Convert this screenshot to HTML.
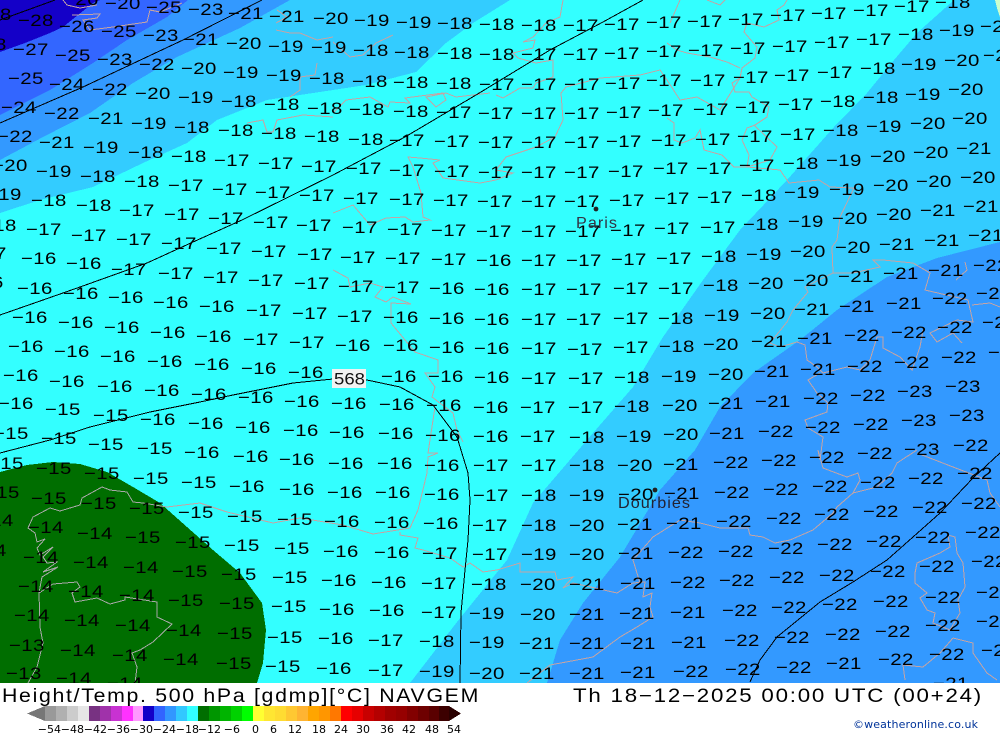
<!DOCTYPE html>
<html><head><meta charset="utf-8"><style>
html,body{margin:0;padding:0;background:#fff}
svg{display:block}
.l text{font:17px "Liberation Sans",sans-serif;fill:#000;letter-spacing:.3px;transform-box:fill-box;transform-origin:0 50%;transform:scaleX(1.2)}
polygon,polyline{shape-rendering:crispEdges}
</style></head><body>
<svg width="1000" height="733" viewBox="0 0 1000 733" xmlns="http://www.w3.org/2000/svg">
<rect width="1000" height="733" fill="#fff"/>
<rect width="1000" height="683" fill="#33ffff"/>
<polygon fill="#33ccff" points="0,0 510,0 473,23 446,43 416,72 366,85 333,90 267,100 217,120 187,143 143,163 93,187 40,200 0,213"/>
<polygon fill="#3399ff" points="0,0 290,0 240,28 177,57 133,83 90,113 43,137 0,160"/>
<polygon fill="#3366ff" points="0,0 188,0 167,17 127,40 93,63 50,90 0,115"/>
<polygon fill="#1400c8" points="0,0 100,0 93,3 63,27 50,33 25,43 0,52"/>
<polygon fill="#33ccff" points="954,0 1000,0 1000,683 410,683 457,622 507,560 533,503 593,433 633,387 663,337 703,280 740,230 787,180 834,127 867,93 894,60 917,33"/>
<polygon fill="#3399ff" points="1000,242 1000,683 547,683 560,640 583,603 620,557 660,490 695,450 720,407 753,373 800,340 837,310 887,277 937,258"/>
<polygon fill="#ccffcc" points="995,0 1000,0 1000,17 997,8"/>
<polygon fill="#006e00" points="0,472 27,465 53,462 80,464 107,472 133,487 160,503 187,527 213,550 240,573 262,603 266,630 263,663 257,683 0,683"/>
<g fill="none" stroke="#c4a4a4" stroke-width="1">
<polyline points="63,0 67,5 80,8 97,5"/>
<polyline points="72,15 100,14 97,18 83,20 90,30 113,27 147,22 150,10 160,12 182,3"/>
<polyline points="276,23 287,17 277,10"/>
<polyline points="276,30 290,33 300,33 317,40 333,37"/>
<polyline points="290,97 300,90 300,77 315,75 317,63"/>
<polyline points="247,123 263,120 267,132 273,132 277,120 303,115 333,117"/>
<polyline points="563,0 560,17 546,23 533,37 523,42 535,40 533,48 513,53 518,58 536,63 553,60 553,77 536,83 533,88 520,88 503,98 496,95"/>
<polyline points="393,35 376,43 363,55 350,57 333,42"/>
<polyline points="490,93 456,97 446,93 426,97 436,107 446,100 443,93 405,98 410,103 390,102 388,107 370,97 346,100 333,113"/>
<polyline points="600,78 566,87 561,93 563,120 555,137 536,147 506,157 496,170 513,173 496,180 480,183 443,178 433,163 440,160 420,158 408,157 413,167 421,193 423,217 430,220 413,222 405,217 386,218 370,225 353,205 333,213"/>
<polyline points="333,270 348,278 350,287 370,283 383,287 375,297 386,302 393,297 411,304 391,303 391,323 405,340 415,352 438,360 438,373 425,373 435,387 432,397 453,413 457,430 463,442"/>
<polyline points="435,407 428,453 438,453 428,457 427,473 418,510 410,528 373,534 343,525 300,518 273,523 227,512 200,503 167,507"/>
<polyline points="400,532 400,535 418,538 415,548 423,550 450,558 463,567 470,563 483,572 497,570 520,563 520,572 555,572 557,580 573,577 563,588 573,583 617,593 633,583 645,582 643,597 652,593 650,607 653,617 637,627 620,637 593,657 550,665 527,683"/>
<polyline points="680,0 670,23"/><polyline points="707,0 720,5 725,0"/>
<polyline points="787,0 784,5 777,10 779,20 764,27 747,23 744,32 757,47 755,58 742,68 740,78 732,83 735,92 749,92 752,97 769,107 767,117 755,125 747,128 742,140 749,155 747,167 734,167 722,155 704,150 700,130 695,138 682,143 674,140 674,123 667,118"/>
<polyline points="754,125 777,147 770,160 747,167 780,170 789,183 819,180 830,187 854,188 840,217 837,240 832,247 833,273"/>
<polyline points="667,43 677,50 687,53 710,57 727,62 740,68"/>
<polyline points="600,78 640,75 660,70 667,80 680,100 697,97 720,110 740,78"/>
<polyline points="833,273 853,273 880,267 873,260 883,260 913,263 930,273 925,290 968,300 973,322 957,320 930,333 937,342 953,333 962,343"/>
<polyline points="965,262 967,270 956,280"/><polyline points="972,305 990,303 1000,307"/>
<polyline points="833,273 805,287 808,292 793,310 787,322 770,343 780,347 797,342 805,345 807,360 817,367 823,373 847,367 860,370 870,360 877,337 883,337 883,348 900,357 912,370 920,347 923,330"/>
<polyline points="820,373 808,380 817,393 828,403 827,412 805,420 808,428 823,437 820,460 818,450 823,468 847,477 858,473 860,480 853,493 837,507 833,513 813,530 790,540 775,543 763,537 750,535 748,528 720,528 700,523 680,520 653,537 633,560 640,583"/>
<polyline points="917,450 897,463 892,473 877,487 853,493"/>
<polyline points="917,453 953,467 987,480 990,493 1000,507"/>
<polyline points="948,535 955,537 957,553 963,563 965,587 958,600 960,613 950,630 933,623 935,613 927,610 920,598 927,593 915,583 915,573 917,563 940,553 950,547 948,535"/>
<polyline points="953,638 973,643 973,653 987,673 997,680"/>
<polyline points="953,638 940,653 923,667 903,665 905,680"/>
<polyline points="167,507 143,503 133,502 127,492 110,490 102,487 82,498 80,505 60,511 50,508 33,517 28,528 35,533 37,542 45,539 37,548 40,555 53,547 43,557 47,563 57,562 43,572 58,567 42,577 39,593 40,627 43,643 37,667 28,683" stroke="#a8a8a8"/>
<polyline points="39,593 53,584 77,582 80,587 72,593 75,602 97,598 110,604 125,600 125,597 157,602 157,617 172,624 153,642 140,650 132,653 137,667 135,683" stroke="#a8a8a8"/>
</g>
<g fill="none" stroke="#000" stroke-width="1">
<polyline points="0,20 55,0"/>
<polyline points="0,123 83,87 183,40 262,0"/>
<polyline points="0,315 43,300 80,287 147,263 193,242 242,220 333,175 405,137 476,95 550,50 603,22 643,0"/>
<polyline points="0,453 50,440 90,427 150,412 200,402 233,395 293,383 333,379 367,380 400,387 433,405 457,437 468,473 470,500 468,540 465,570 461,613 460,683"/>
<polyline points="1000,453 973,478 940,513 913,537 887,560 853,582 820,602 777,637 760,660 750,682"/>
</g>
<g transform="translate(-24,6)" class="l">
<text x="87" y="-1">−26</text><text x="129" y="3">−20</text><text x="170" y="7">−25</text><text x="212" y="9">−23</text><text x="252" y="13">−21</text><text x="293" y="16">−21</text><text x="337" y="18">−20</text><text x="378" y="20">−19</text><text x="420" y="22">−19</text><text x="461" y="23">−18</text><text x="503" y="24">−18</text><text x="545" y="25">−18</text><text x="587" y="25">−17</text><text x="628" y="24">−17</text><text x="670" y="22">−17</text><text x="711" y="21">−17</text><text x="752" y="19">−17</text><text x="794" y="15">−17</text><text x="835" y="13">−17</text><text x="877" y="10">−17</text><text x="918" y="6">−17</text><text x="959" y="2">−18</text>
<text x="0" y="14">−28</text><text x="42" y="20">−28</text><text x="83" y="26">−26</text><text x="125" y="31">−25</text><text x="167" y="35">−23</text><text x="207" y="39">−21</text><text x="250" y="43">−20</text><text x="292" y="46">−19</text><text x="335" y="47">−19</text><text x="377" y="50">−18</text><text x="418" y="52">−18</text><text x="461" y="53">−18</text><text x="503" y="54">−18</text><text x="545" y="54">−17</text><text x="587" y="54">−17</text><text x="628" y="53">−17</text><text x="670" y="51">−17</text><text x="712" y="50">−17</text><text x="754" y="48">−17</text><text x="796" y="46">−17</text><text x="838" y="42">−17</text><text x="880" y="39">−17</text><text x="922" y="34">−18</text><text x="963" y="30">−19</text><text x="1004" y="26">−20</text>
<text x="-5" y="44">−28</text><text x="37" y="49">−27</text><text x="79" y="55">−25</text><text x="121" y="59">−23</text><text x="163" y="64">−22</text><text x="205" y="68">−20</text><text x="247" y="72">−19</text><text x="290" y="75">−19</text><text x="333" y="78">−18</text><text x="376" y="81">−18</text><text x="417" y="82">−18</text><text x="460" y="83">−18</text><text x="503" y="84">−17</text><text x="545" y="84">−17</text><text x="588" y="84">−17</text><text x="629" y="83">−17</text><text x="670" y="80">−17</text><text x="714" y="80">−17</text><text x="757" y="77">−17</text><text x="798" y="75">−17</text><text x="841" y="72">−17</text><text x="884" y="68">−18</text><text x="925" y="64">−19</text><text x="968" y="60">−20</text><text x="1007" y="55">−20</text>
<text x="32" y="78">−25</text><text x="73" y="84">−24</text><text x="116" y="89">−22</text><text x="159" y="93">−20</text><text x="202" y="97">−19</text><text x="245" y="101">−18</text><text x="288" y="104">−18</text><text x="331" y="108">−18</text><text x="373" y="109">−18</text><text x="417" y="111">−18</text><text x="460" y="112">−17</text><text x="502" y="113">−17</text><text x="545" y="113">−17</text><text x="588" y="113">−17</text><text x="630" y="112">−17</text><text x="672" y="110">−17</text><text x="717" y="109">−17</text><text x="759" y="107">−17</text><text x="802" y="104">−17</text><text x="844" y="101">−18</text><text x="887" y="97">−18</text><text x="929" y="94">−19</text><text x="972" y="89">−20</text>
<text x="25" y="107">−24</text><text x="68" y="113">−22</text><text x="112" y="118">−21</text><text x="155" y="123">−19</text><text x="198" y="127">−18</text><text x="242" y="130">−18</text><text x="285" y="133">−18</text><text x="328" y="136">−18</text><text x="372" y="139">−18</text><text x="413" y="140">−17</text><text x="458" y="141">−17</text><text x="502" y="142">−17</text><text x="545" y="142">−17</text><text x="588" y="142">−17</text><text x="630" y="141">−17</text><text x="675" y="140">−17</text><text x="719" y="139">−17</text><text x="761" y="136">−17</text><text x="804" y="134">−17</text><text x="847" y="130">−18</text><text x="890" y="126">−19</text><text x="934" y="123">−20</text><text x="976" y="118">−20</text>
<text x="21" y="136">−22</text><text x="63" y="142">−21</text><text x="107" y="147">−19</text><text x="152" y="152">−18</text><text x="195" y="156">−18</text><text x="238" y="160">−17</text><text x="282" y="163">−17</text><text x="325" y="166">−17</text><text x="370" y="168">−17</text><text x="413" y="170">−17</text><text x="458" y="171">−17</text><text x="502" y="172">−17</text><text x="545" y="172">−17</text><text x="588" y="172">−17</text><text x="632" y="171">−17</text><text x="677" y="168">−17</text><text x="720" y="168">−17</text><text x="763" y="165">−17</text><text x="807" y="163">−18</text><text x="850" y="160">−19</text><text x="894" y="156">−20</text><text x="937" y="152">−20</text><text x="980" y="148">−21</text>
<text x="16" y="165">−20</text><text x="60" y="171">−19</text><text x="104" y="176">−18</text><text x="148" y="181">−18</text><text x="192" y="185">−17</text><text x="236" y="189">−17</text><text x="279" y="192">−17</text><text x="323" y="195">−17</text><text x="367" y="198">−17</text><text x="413" y="199">−17</text><text x="457" y="200">−17</text><text x="501" y="201">−17</text><text x="545" y="201">−17</text><text x="588" y="201">−17</text><text x="633" y="200">−17</text><text x="678" y="198">−17</text><text x="721" y="197">−17</text><text x="765" y="195">−18</text><text x="808" y="192">−19</text><text x="853" y="189">−19</text><text x="897" y="185">−20</text><text x="940" y="181">−20</text><text x="984" y="177">−20</text>
<text x="10" y="194">−19</text><text x="55" y="200">−18</text><text x="100" y="205">−18</text><text x="143" y="210">−17</text><text x="188" y="214">−17</text><text x="232" y="218">−17</text><text x="277" y="222">−17</text><text x="320" y="225">−17</text><text x="366" y="227">−17</text><text x="411" y="229">−17</text><text x="455" y="230">−17</text><text x="500" y="231">−17</text><text x="545" y="231">−17</text><text x="589" y="231">−17</text><text x="634" y="230">−17</text><text x="678" y="228">−17</text><text x="724" y="227">−17</text><text x="767" y="224">−18</text><text x="812" y="221">−19</text><text x="856" y="218">−20</text><text x="900" y="214">−20</text><text x="944" y="210">−21</text><text x="987" y="206">−21</text>
<text x="5" y="225">−18</text><text x="50" y="229">−17</text><text x="95" y="235">−17</text><text x="140" y="239">−17</text><text x="185" y="243">−17</text><text x="230" y="248">−17</text><text x="275" y="251">−17</text><text x="321" y="254">−17</text><text x="364" y="257">−17</text><text x="409" y="258">−17</text><text x="455" y="259">−17</text><text x="500" y="260">−16</text><text x="545" y="260">−17</text><text x="590" y="260">−17</text><text x="635" y="259">−17</text><text x="680" y="258">−17</text><text x="725" y="256">−18</text><text x="770" y="254">−19</text><text x="814" y="251">−20</text><text x="859" y="247">−20</text><text x="903" y="244">−21</text><text x="948" y="240">−21</text><text x="992" y="235">−21</text>
<text x="-5" y="253">−17</text><text x="45" y="258">−16</text><text x="90" y="263">−16</text><text x="135" y="269">−17</text><text x="182" y="273">−17</text><text x="227" y="277">−17</text><text x="272" y="280">−17</text><text x="318" y="283">−17</text><text x="362" y="286">−17</text><text x="408" y="287">−17</text><text x="453" y="288">−16</text><text x="498" y="289">−16</text><text x="545" y="289">−17</text><text x="590" y="289">−17</text><text x="637" y="288">−17</text><text x="682" y="288">−17</text><text x="727" y="285">−18</text><text x="772" y="283">−20</text><text x="817" y="280">−20</text><text x="862" y="276">−21</text><text x="907" y="273">−21</text><text x="952" y="270">−21</text><text x="997" y="265">−22</text>
<text x="-8" y="282">−16</text><text x="41" y="288">−16</text><text x="87" y="293">−16</text><text x="132" y="297">−16</text><text x="177" y="302">−16</text><text x="223" y="306">−16</text><text x="270" y="310">−17</text><text x="316" y="313">−17</text><text x="361" y="316">−17</text><text x="407" y="317">−16</text><text x="453" y="318">−16</text><text x="498" y="319">−16</text><text x="545" y="319">−17</text><text x="590" y="319">−17</text><text x="637" y="318">−17</text><text x="682" y="318">−18</text><text x="728" y="315">−19</text><text x="774" y="313">−20</text><text x="818" y="309">−21</text><text x="863" y="306">−21</text><text x="910" y="303">−21</text><text x="956" y="298">−22</text><text x="1000" y="293">−22</text>
<text x="36" y="317">−16</text><text x="82" y="322">−16</text><text x="128" y="327">−16</text><text x="174" y="332">−16</text><text x="220" y="336">−16</text><text x="267" y="339">−17</text><text x="313" y="342">−17</text><text x="359" y="345">−16</text><text x="407" y="345">−16</text><text x="453" y="347">−16</text><text x="498" y="348">−16</text><text x="545" y="348">−17</text><text x="591" y="349">−17</text><text x="637" y="347">−17</text><text x="683" y="346">−18</text><text x="727" y="344">−20</text><text x="775" y="341">−21</text><text x="821" y="338">−21</text><text x="868" y="335">−22</text><text x="915" y="332">−22</text><text x="961" y="327">−22</text><text x="1006" y="322">−22</text>
<text x="32" y="346">−16</text><text x="78" y="351">−16</text><text x="124" y="356">−16</text><text x="171" y="361">−16</text><text x="218" y="364">−16</text><text x="265" y="368">−16</text><text x="312" y="372">−16</text><text x="405" y="376">−16</text><text x="452" y="376">−16</text><text x="498" y="377">−16</text><text x="545" y="378">−17</text><text x="592" y="378">−17</text><text x="638" y="377">−18</text><text x="685" y="376">−19</text><text x="732" y="374">−20</text><text x="778" y="371">−21</text><text x="824" y="369">−21</text><text x="871" y="366">−22</text><text x="918" y="362">−22</text><text x="965" y="357">−22</text><text x="1012" y="352">−22</text>
<text x="27" y="375">−16</text><text x="73" y="381">−16</text><text x="121" y="386">−16</text><text x="168" y="390">−16</text><text x="215" y="394">−16</text><text x="262" y="397">−16</text><text x="308" y="401">−16</text><text x="355" y="403">−16</text><text x="403" y="404">−16</text><text x="450" y="405">−16</text><text x="497" y="407">−16</text><text x="544" y="407">−17</text><text x="592" y="407">−17</text><text x="638" y="406">−18</text><text x="686" y="405">−20</text><text x="732" y="403">−21</text><text x="779" y="401">−21</text><text x="827" y="398">−22</text><text x="874" y="395">−22</text><text x="921" y="391">−23</text><text x="969" y="386">−23</text>
<text x="22" y="403">−16</text><text x="69" y="409">−15</text><text x="117" y="415">−15</text><text x="164" y="419">−16</text><text x="212" y="423">−16</text><text x="259" y="427">−16</text><text x="307" y="430">−16</text><text x="353" y="432">−16</text><text x="402" y="433">−16</text><text x="449" y="435">−16</text><text x="497" y="436">−16</text><text x="544" y="436">−17</text><text x="593" y="437">−18</text><text x="640" y="436">−19</text><text x="687" y="434">−20</text><text x="733" y="433">−21</text><text x="782" y="431">−22</text><text x="829" y="427">−22</text><text x="877" y="424">−22</text><text x="925" y="420">−23</text><text x="973" y="415">−23</text>
<text x="17" y="433">−15</text><text x="65" y="438">−15</text><text x="112" y="444">−15</text><text x="161" y="448">−15</text><text x="208" y="452">−16</text><text x="257" y="456">−16</text><text x="303" y="459">−16</text><text x="352" y="463">−16</text><text x="401" y="463">−16</text><text x="448" y="465">−16</text><text x="497" y="465">−17</text><text x="545" y="465">−17</text><text x="593" y="465">−18</text><text x="641" y="465">−20</text><text x="687" y="464">−21</text><text x="737" y="462">−22</text><text x="785" y="460">−22</text><text x="833" y="457">−22</text><text x="881" y="453">−22</text><text x="928" y="449">−23</text><text x="977" y="445">−22</text>
<text x="12" y="463">−15</text><text x="60" y="468">−15</text><text x="108" y="473">−15</text><text x="157" y="478">−15</text><text x="205" y="482">−15</text><text x="253" y="486">−16</text><text x="303" y="489">−16</text><text x="351" y="492">−16</text><text x="399" y="492">−16</text><text x="448" y="494">−16</text><text x="497" y="495">−17</text><text x="545" y="495">−18</text><text x="593" y="495">−19</text><text x="642" y="494">−20</text><text x="688" y="493">−21</text><text x="738" y="492">−22</text><text x="787" y="489">−22</text><text x="836" y="486">−22</text><text x="884" y="482">−22</text><text x="932" y="478">−22</text><text x="981" y="473">−22</text>
<text x="8" y="492">−15</text><text x="55" y="498">−15</text><text x="105" y="503">−15</text><text x="153" y="508">−15</text><text x="202" y="512">−15</text><text x="251" y="516">−15</text><text x="301" y="519">−15</text><text x="348" y="521">−16</text><text x="398" y="522">−16</text><text x="447" y="523">−16</text><text x="496" y="525">−17</text><text x="545" y="525">−18</text><text x="593" y="525">−20</text><text x="641" y="524">−21</text><text x="690" y="523">−21</text><text x="740" y="521">−22</text><text x="790" y="518">−22</text><text x="838" y="514">−22</text><text x="887" y="511">−22</text><text x="936" y="507">−22</text><text x="985" y="503">−22</text>
<text x="2" y="520">−14</text><text x="52" y="527">−14</text><text x="101" y="533">−14</text><text x="149" y="537">−15</text><text x="199" y="542">−15</text><text x="248" y="545">−15</text><text x="298" y="548">−15</text><text x="347" y="551">−16</text><text x="398" y="552">−16</text><text x="446" y="553">−17</text><text x="496" y="554">−17</text><text x="545" y="554">−19</text><text x="593" y="554">−20</text><text x="642" y="553">−21</text><text x="692" y="552">−22</text><text x="742" y="551">−22</text><text x="792" y="548">−22</text><text x="841" y="544">−22</text><text x="890" y="541">−22</text><text x="939" y="537">−22</text><text x="989" y="532">−22</text>
<text x="-5" y="550">−14</text><text x="47" y="557">−14</text><text x="97" y="562">−14</text><text x="147" y="567">−14</text><text x="196" y="571">−15</text><text x="245" y="574">−15</text><text x="296" y="577">−15</text><text x="345" y="580">−16</text><text x="395" y="582">−16</text><text x="445" y="583">−17</text><text x="495" y="584">−18</text><text x="544" y="584">−20</text><text x="593" y="584">−21</text><text x="644" y="583">−21</text><text x="694" y="582">−22</text><text x="743" y="580">−22</text><text x="793" y="577">−22</text><text x="843" y="575">−22</text><text x="894" y="571">−22</text><text x="943" y="566">−22</text><text x="995" y="561">−22</text>
<text x="42" y="586">−14</text><text x="92" y="591">−14</text><text x="143" y="595">−14</text><text x="192" y="600">−15</text><text x="243" y="603">−15</text><text x="295" y="606">−15</text><text x="343" y="609">−16</text><text x="393" y="610">−16</text><text x="445" y="612">−17</text><text x="493" y="613">−19</text><text x="544" y="614">−20</text><text x="593" y="614">−21</text><text x="643" y="613">−21</text><text x="694" y="612">−21</text><text x="746" y="610">−22</text><text x="795" y="607">−22</text><text x="846" y="604">−22</text><text x="897" y="601">−22</text><text x="949" y="597">−22</text><text x="1000" y="592">−22</text>
<text x="38" y="615">−14</text><text x="88" y="620">−14</text><text x="139" y="625">−14</text><text x="190" y="630">−14</text><text x="241" y="633">−15</text><text x="291" y="637">−15</text><text x="342" y="638">−16</text><text x="392" y="640">−17</text><text x="443" y="641">−18</text><text x="493" y="642">−19</text><text x="543" y="643">−21</text><text x="593" y="643">−21</text><text x="644" y="643">−21</text><text x="695" y="642">−21</text><text x="748" y="640">−22</text><text x="798" y="637">−22</text><text x="849" y="634">−22</text><text x="899" y="631">−22</text><text x="949" y="625">−22</text><text x="1000" y="621">−22</text>
<text x="33" y="645">−13</text><text x="84" y="650">−14</text><text x="136" y="655">−14</text><text x="187" y="659">−14</text><text x="240" y="663">−15</text><text x="289" y="666">−15</text><text x="340" y="668">−16</text><text x="392" y="670">−17</text><text x="443" y="671">−19</text><text x="493" y="673">−20</text><text x="543" y="673">−21</text><text x="593" y="673">−21</text><text x="644" y="672">−21</text><text x="697" y="671">−22</text><text x="749" y="669">−22</text><text x="800" y="667">−22</text><text x="850" y="663">−21</text><text x="902" y="659">−22</text><text x="953" y="654">−22</text><text x="1005" y="650">−22</text>
<text x="30" y="673">−13</text><text x="80" y="678">−14</text><text x="131" y="683">−14</text><text x="957" y="683">−21</text>
</g>
<rect x="332" y="369" width="34" height="19" fill="#f2f2f2"/>
<text x="334" y="384.5" font-family="Liberation Sans" font-size="17" textLength="31" lengthAdjust="spacingAndGlyphs" fill="#111">568</text>
<circle cx="596" cy="209" r="2.4" fill="#222"/>
<text x="576" y="228" font-family="Liberation Sans" font-size="16" letter-spacing="1" textLength="42" lengthAdjust="spacingAndGlyphs" fill="#334">Paris</text>
<circle cx="655" cy="490" r="2.4" fill="#222"/>
<text x="618" y="508" font-family="Liberation Sans" font-size="16" letter-spacing="1" textLength="73" lengthAdjust="spacingAndGlyphs" fill="#223">Dourbies</text>
<rect y="683" width="1000" height="50" fill="#fff"/>
<text x="2" y="702" font-family="Liberation Sans" font-size="19" letter-spacing="1.5" textLength="478" lengthAdjust="spacingAndGlyphs" fill="#000">Height/Temp. 500 hPa [gdmp][°C] NAVGEM</text>
<text x="573" y="702" font-family="Liberation Sans" font-size="19" letter-spacing="1.5" textLength="410" lengthAdjust="spacingAndGlyphs" fill="#000">Th 18−12−2025 00:00 UTC (00+24)</text>
<polygon points="27,713.5 45,706 45,721" fill="#777"/>
<g shape-rendering="crispEdges">
<rect x="45" y="706" width="11" height="15" fill="#999"/><rect x="56" y="706" width="11" height="15" fill="#b0b0b0"/><rect x="67" y="706" width="11" height="15" fill="#ccc"/><rect x="78" y="706" width="11" height="15" fill="#e6e6e6"/>
<rect x="89" y="706" width="11" height="15" fill="#783282"/><rect x="100" y="706" width="11" height="15" fill="#a032aa"/><rect x="111" y="706" width="11" height="15" fill="#c832d2"/><rect x="122" y="706" width="11" height="15" fill="#ff32ff"/><rect x="133" y="706" width="10" height="15" fill="#ff99ff"/>
<rect x="143" y="706" width="11" height="15" fill="#1400c8"/><rect x="154" y="706" width="11" height="15" fill="#3264ff"/><rect x="165" y="706" width="11" height="15" fill="#3296ff"/><rect x="176" y="706" width="11" height="15" fill="#32c8ff"/><rect x="187" y="706" width="11" height="15" fill="#32ffff"/>
<rect x="198" y="706" width="11" height="15" fill="#006e00"/><rect x="209" y="706" width="11" height="15" fill="#009600"/><rect x="220" y="706" width="11" height="15" fill="#00b400"/><rect x="231" y="706" width="11" height="15" fill="#00d200"/><rect x="242" y="706" width="11" height="15" fill="#00ff00"/>
<rect x="253" y="706" width="11" height="15" fill="#ffff32"/><rect x="264" y="706" width="11" height="15" fill="#ffe632"/><rect x="275" y="706" width="11" height="15" fill="#ffdc32"/><rect x="286" y="706" width="11" height="15" fill="#ffc832"/><rect x="297" y="706" width="11" height="15" fill="#ffb432"/><rect x="308" y="706" width="11" height="15" fill="#ffa500"/><rect x="319" y="706" width="11" height="15" fill="#ff9600"/><rect x="330" y="706" width="11" height="15" fill="#ff7800"/>
<rect x="341" y="706" width="11" height="15" fill="#ff0000"/><rect x="352" y="706" width="11" height="15" fill="#e60000"/><rect x="363" y="706" width="11" height="15" fill="#c80000"/><rect x="374" y="706" width="11" height="15" fill="#b40000"/><rect x="385" y="706" width="11" height="15" fill="#a00000"/><rect x="396" y="706" width="11" height="15" fill="#960000"/><rect x="407" y="706" width="11" height="15" fill="#820000"/><rect x="418" y="706" width="11" height="15" fill="#6e0000"/><rect x="429" y="706" width="10" height="15" fill="#5a0000"/><rect x="439" y="706" width="10" height="15" fill="#3c0000"/>
</g>
<polygon points="449,706 461,713.5 449,721" fill="#2a0000"/>
<g font-family="DejaVu Sans" font-size="11" text-anchor="end" fill="#000">
<text x="61" y="733">−54</text><text x="84" y="733">−48</text><text x="107" y="733">−42</text><text x="130" y="733">−36</text><text x="153" y="733">−30</text><text x="176" y="733">−24</text><text x="199" y="733">−18</text><text x="221" y="733">−12</text><text x="240" y="733">−6</text><text x="259" y="733">0</text><text x="277" y="733">6</text><text x="302" y="733">12</text><text x="326" y="733">18</text><text x="348" y="733">24</text><text x="370" y="733">30</text><text x="394" y="733">36</text><text x="416" y="733">42</text><text x="439" y="733">48</text><text x="461" y="733">54</text>
</g>
<text x="853" y="728" font-family="DejaVu Sans" font-size="11" textLength="125" lengthAdjust="spacing" fill="#003399">©weatheronline.co.uk</text>
</svg>
</body></html>
